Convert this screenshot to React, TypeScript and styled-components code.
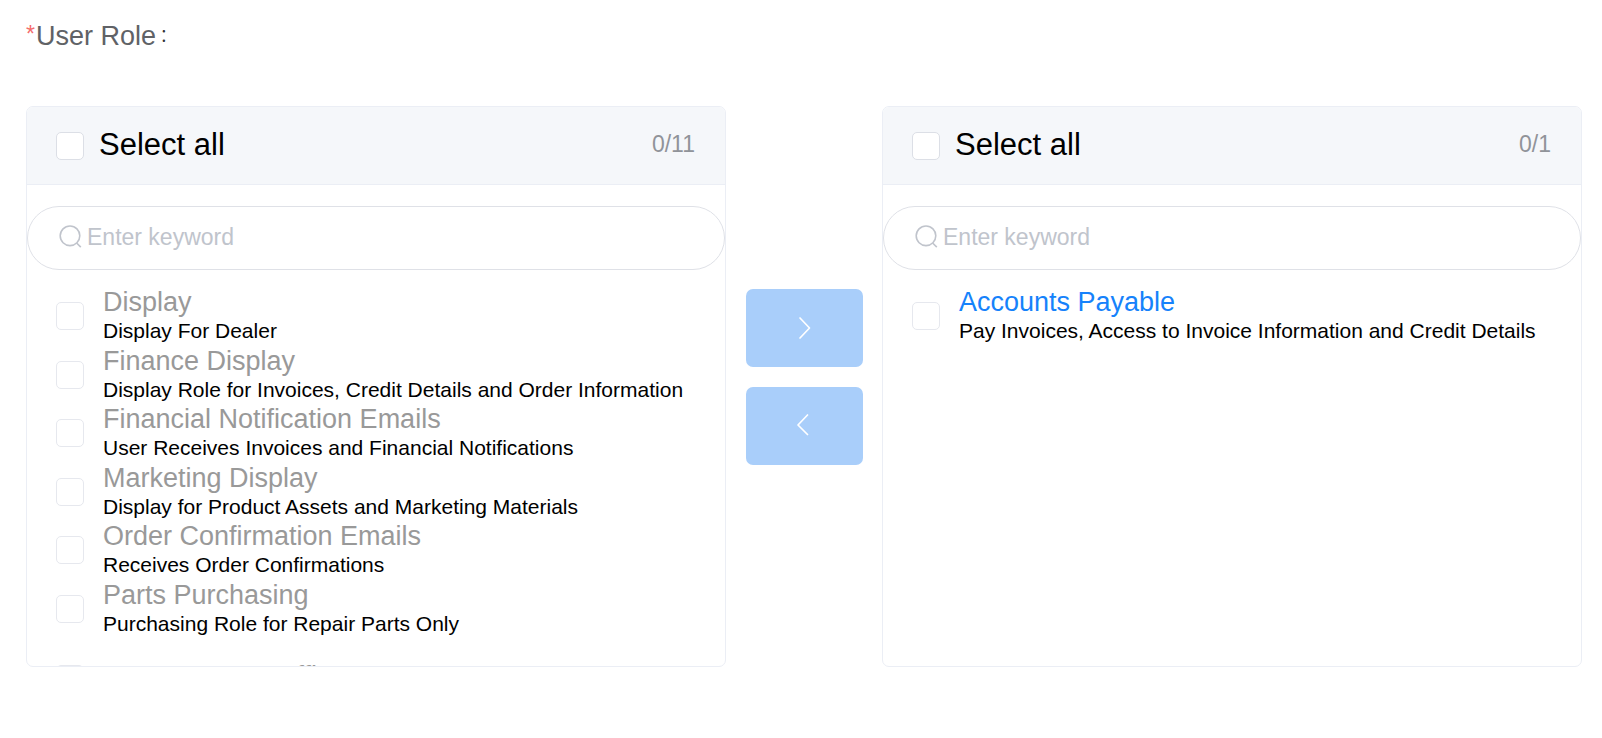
import React, { useId } from "react";
import styled, { createGlobalStyle } from "styled-components";

const GlobalStyle = createGlobalStyle`
  *, *::before, *::after { box-sizing: border-box; }
  body {
    margin: 0;
    background: #fff;
    color: #000;
    font-family: Arial, "Liberation Sans", sans-serif;
  }
`;

const Page = styled.main`
  padding: 15px 20px 20px 26px;
`;

const FieldLabel = styled.h1`
  display: flex;
  align-items: center;
  height: 42px;
  margin: 0 0 49px;
  color: #606266;
  font-size: 27px;
  line-height: 42px;
  font-weight: 400;
`;

const Required = styled.span`
  align-self: flex-start;
  margin-right: 1px;
  color: #f56c6c;
  font-size: 23px;
  line-height: 38px;
`;

const Colon = styled.span`
  align-self: flex-start;
  margin-left: 5px;
  color: #303133;
  font-family: "Noto Sans CJK SC", sans-serif;
  font-size: 23px;
  font-weight: 300;
  line-height: 34px;
`;

const Transfer = styled.div`
  display: flex;
  align-items: flex-start;
`;

const PanelBox = styled.section`
  flex: 1 1 0;
  min-width: 0;
  overflow: hidden;
  border: 1px solid #ebeef5;
  border-radius: 7px;
  background: #fff;
`;

const PanelHeader = styled.header`
  display: flex;
  align-items: center;
  justify-content: space-between;
  height: 78px;
  padding: 0 30px 0 29px;
  border-bottom: 1px solid #ebeef5;
  background: #f5f7fa;
`;

const SelectAll = styled.label`
  display: flex;
  align-items: center;
  gap: 15px;
  font-size: 31px;
  line-height: 36px;
`;

const SelectAllText = styled.span`
  padding-bottom: 2px;
`;

const Checkbox = styled.input.attrs({ type: "checkbox" })<{ $soft?: boolean }>`
  appearance: none;
  flex: none;
  width: 28px;
  height: 28px;
  margin: 0;
  border: 1px solid ${(p) => (p.$soft ? "#e6e8ee" : "#dcdfe6")};
  border-radius: 5px;
  background: #fff;
`;

const Count = styled.span`
  padding-bottom: 4px;
  color: #909399;
  font-size: 23px;
  line-height: 36px;
`;

const SearchBox = styled.label`
  display: flex;
  align-items: center;
  gap: 5px;
  height: 64px;
  margin: 21px 0 17px;
  padding: 0 31px 2px;
  border: 1px solid #dfe1e7;
  border-radius: 32px;
  color: #c0c4cc;
`;

const SearchInput = styled.input`
  flex: 1;
  min-width: 0;
  padding: 0;
  border: 0;
  outline: 0;
  background: none;
  color: #606266;
  font: 23px/30px Arial, "Liberation Sans", sans-serif;
  &::placeholder { color: #c0c4cc; opacity: 1; }
`;

const RoleList = styled.ul`
  display: grid;
  grid-template-rows: repeat(6, 1fr) 28px;
  height: 379px;
  margin: 0;
  padding: 0 0 0 29px;
  overflow: hidden;
  list-style: none;
`;

const RoleItem = styled.li<{ $brief: boolean }>`
  min-height: 0;
  padding-top: ${(p) => (p.$brief ? 23 : 0)}px;
`;

const RoleLabel = styled.label<{ $brief: boolean }>`
  display: flex;
  align-items: ${(p) => (p.$brief ? "flex-start" : "center")};
  gap: 19px;
  height: 100%;
  white-space: nowrap;
  ${Checkbox} { margin-top: ${(p) => (p.$brief ? 4 : 0)}px; }
`;

const RoleText = styled.span`
  display: flex;
  flex-direction: column;
`;

const RoleName = styled.span<{ $active: boolean }>`
  color: ${(p) => (p.$active ? "#1682fb" : "#999")};
  font-size: 27px;
  line-height: 30px;
`;

const RoleDescription = styled.span`
  color: #000;
  font-size: 21px;
  line-height: 28px;
`;

const Actions = styled.div`
  display: flex;
  flex-direction: column;
  gap: 20px;
  margin: 183px 19px 0 20px;
`;

const MoveButton = styled.button`
  display: grid;
  place-items: center;
  width: 117px;
  height: 78px;
  padding: 0;
  border: 0;
  border-radius: 7px;
  background: #a9cefa;
  color: #fff;
`;

type Role = { name: string; description?: string };

const available: Role[] = [
  { name: "Display", description: "Display For Dealer" },
  { name: "Finance Display", description: "Display Role for Invoices, Credit Details and Order Information" },
  { name: "Financial Notification Emails", description: "User Receives Invoices and Financial Notifications" },
  { name: "Marketing Display", description: "Display for Product Assets and Marketing Materials" },
  { name: "Order Confirmation Emails", description: "Receives Order Confirmations" },
  { name: "Parts Purchasing", description: "Purchasing Role for Repair Parts Only" },
  { name: "Parts Support Office" },
];

const assigned: Role[] = [
  { name: "Accounts Payable", description: "Pay Invoices, Access to Invoice Information and Credit Details" },
];

const SearchIcon = () => (
  <svg width="23" height="24" viewBox="0 0 23 24" fill="none" stroke="currentColor" strokeWidth="1.6" aria-hidden="true">
    <circle cx="11" cy="10.8" r="9.8" />
    <path d="M17.6 18 21.8 22.1" />
  </svg>
);

const Chevron = ({ to }: { to: "left" | "right" }) => (
  <svg width="24" height="24" viewBox="0 0 24 24" fill="none" stroke="currentColor" strokeWidth="1.7" strokeLinecap="round" strokeLinejoin="round" aria-hidden="true">
    <path d={to === "right" ? "M7 2 16.5 12 7 22" : "M14.5 1 5 11 14.5 20.5"} />
  </svg>
);

type PanelProps = { label: string; roles: Role[]; total: number; active?: boolean };

const Panel = ({ label, roles, total, active = false }: PanelProps) => {
  const id = useId();
  return (
    <PanelBox aria-label={label}>
      <PanelHeader>
        <SelectAll htmlFor={`${id}-all`}>
          <Checkbox id={`${id}-all`} />
          <SelectAllText>Select all</SelectAllText>
        </SelectAll>
        <Count>0/{total}</Count>
      </PanelHeader>
      <SearchBox htmlFor={`${id}-search`}>
        <SearchIcon />
        <SearchInput id={`${id}-search`} type="text" placeholder="Enter keyword" aria-label="Enter keyword" />
      </SearchBox>
      <RoleList>
        {roles.map((role, i) => (
          <RoleItem key={role.name} $brief={!role.description}>
            <RoleLabel htmlFor={`${id}-${i}`} $brief={!role.description}>
              <Checkbox id={`${id}-${i}`} $soft />
              <RoleText>
                <RoleName $active={active}>{role.name}</RoleName>
                {role.description && <RoleDescription>{role.description}</RoleDescription>}
              </RoleText>
            </RoleLabel>
          </RoleItem>
        ))}
      </RoleList>
    </PanelBox>
  );
};

export default function App() {
  return (
    <>
      <GlobalStyle />
      <Page>
        <FieldLabel>
          <Required>*</Required>
          User Role
          <Colon>:</Colon>
        </FieldLabel>
        <Transfer>
          <Panel label="Available roles" roles={available} total={11} />
          <Actions>
            <MoveButton type="button" aria-label="Add selected roles"><Chevron to="right" /></MoveButton>
            <MoveButton type="button" aria-label="Remove selected roles"><Chevron to="left" /></MoveButton>
          </Actions>
          <Panel label="Assigned roles" roles={assigned} total={1} active />
        </Transfer>
      </Page>
    </>
  );
}
